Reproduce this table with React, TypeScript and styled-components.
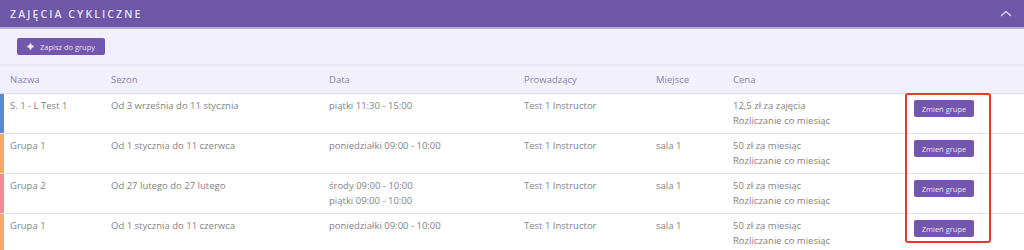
import styled, { createGlobalStyle } from "styled-components";

const GlobalStyle = createGlobalStyle`
  html, body {
    margin: 0;
    padding: 0;
    background: #ffffff;
  }
  body {
    font-family: "Open Sans", "Noto Sans", sans-serif;
  }
`;

const COLUMNS = "111px 218px 195px 132px 77px 181px 1fr";

const Panel = styled.section`
  position: relative;
  width: 1024px;
  height: 250px;
  overflow: hidden;
  background: #ffffff;
`;

const TitleBar = styled.header`
  height: 27px;
  display: flex;
  align-items: center;
  justify-content: space-between;
  padding: 0 12px 0 10px;
  background: #6e57a6;
  border-bottom: 2px solid #b9addb;
`;

const Title = styled.h2`
  margin: 0;
  font-size: 10.5px;
  font-weight: 600;
  letter-spacing: 2.1px;
  text-transform: uppercase;
  color: #e6e1f4;
`;

const Toolbar = styled.div`
  height: 35px;
  display: flex;
  align-items: center;
  padding-left: 17px;
  background: #f2f0fc;
  border-bottom: 2px solid #e9e7f0;
`;

const PurpleButton = styled.button<{ $w: number }>`
  width: ${({ $w }) => $w}px;
  height: 17px;
  display: flex;
  align-items: center;
  justify-content: center;
  gap: 6px;
  padding: 0;
  border: none;
  border-radius: 2px;
  background: #7357ad;
  color: #e6e0f7;
  font-family: inherit;
  font-size: 7.5px;
  cursor: pointer;
`;

const HeadRow = styled.div`
  display: grid;
  grid-template-columns: ${COLUMNS};
  align-items: center;
  height: 27px;
  background: #f2f0fc;
  border-bottom: 1px solid #dcd8ea;
`;

const HeadCell = styled.div`
  font-size: 9.5px;
  color: #8a82aa;
  &:first-child {
    padding-left: 10px;
  }
`;

const Row = styled.div<{ $accent: string }>`
  display: grid;
  grid-template-columns: ${COLUMNS};
  align-items: start;
  height: 40px;
  padding-top: 4px;
  box-sizing: border-box;
  border-bottom: 1px solid #e4e4e4;
  box-shadow: inset 4px 0 0 ${({ $accent }) => $accent};
  &:last-child {
    border-bottom: none;
  }
`;

const Cell = styled.div`
  font-size: 9.5px;
  line-height: 15px;
  color: #828282;
  white-space: nowrap;
  &:first-child {
    padding-left: 10px;
  }
`;

const ActionCell = styled.div`
  padding-top: 2px;
`;

const Highlight = styled.div`
  position: absolute;
  left: 905px;
  top: 93px;
  width: 86px;
  height: 150px;
  box-sizing: border-box;
  border: 2px solid #e8392f;
  border-radius: 3px;
  pointer-events: none;
`;

type Group = {
  name: string;
  season: string;
  dates: string[];
  instructor: string;
  place: string;
  price: string;
  accent: string;
};

const groups: Group[] = [
  {
    name: "S. 1 - L Test 1",
    season: "Od 3 września do 11 stycznia",
    dates: ["piątki 11:30 - 15:00"],
    instructor: "Test 1 Instructor",
    place: "",
    price: "12,5 zł za zajęcia",
    accent: "#5b88cf",
  },
  {
    name: "Grupa 1",
    season: "Od 1 stycznia do 11 czerwca",
    dates: ["poniedziałki 09:00 - 10:00"],
    instructor: "Test 1 Instructor",
    place: "sala 1",
    price: "50 zł za miesiąc",
    accent: "#f6a868",
  },
  {
    name: "Grupa 2",
    season: "Od 27 lutego do 27 lutego",
    dates: ["środy 09:00 - 10:00", "piątki 09:00 - 10:00"],
    instructor: "Test 1 Instructor",
    place: "sala 1",
    price: "50 zł za miesiąc",
    accent: "#f28b95",
  },
  {
    name: "Grupa 1",
    season: "Od 1 stycznia do 11 czerwca",
    dates: ["poniedziałki 09:00 - 10:00"],
    instructor: "Test 1 Instructor",
    place: "sala 1",
    price: "50 zł za miesiąc",
    accent: "#f6a868",
  },
];

const headers = ["Nazwa", "Sezon", "Data", "Prowadzący", "Miejsce", "Cena", ""];

function ChevronUp() {
  return (
    <svg width="12" height="7" viewBox="0 0 12 7">
      <polyline
        points="1.5,5.5 6,1.5 10.5,5.5"
        fill="none"
        stroke="#d8d0ef"
        strokeWidth="1.5"
        strokeLinecap="round"
        strokeLinejoin="round"
      />
    </svg>
  );
}

function PlusIcon() {
  return (
    <svg width="7" height="7" viewBox="0 0 7 7">
      <path d="M3.5 0.5v6M0.5 3.5h6" stroke="#ffffff" strokeWidth="1.8" />
    </svg>
  );
}

export default function App() {
  return (
    <>
      <GlobalStyle />
      <Panel>
        <TitleBar>
          <Title>Zajęcia cykliczne</Title>
          <ChevronUp />
        </TitleBar>
        <Toolbar>
          <PurpleButton $w={88}>
            <PlusIcon />
            Zapisz do grupy
          </PurpleButton>
        </Toolbar>
        <HeadRow>
          {headers.map((h, i) => (
            <HeadCell key={i}>{h}</HeadCell>
          ))}
        </HeadRow>
        {groups.map((g, i) => (
          <Row key={i} $accent={g.accent}>
            <Cell>{g.name}</Cell>
            <Cell>{g.season}</Cell>
            <Cell>
              {g.dates.map((d) => (
                <div key={d}>{d}</div>
              ))}
            </Cell>
            <Cell>{g.instructor}</Cell>
            <Cell>{g.place}</Cell>
            <Cell>
              <div>{g.price}</div>
              <div>Rozliczanie co miesiąc</div>
            </Cell>
            <ActionCell>
              <PurpleButton $w={60}>Zmień grupe</PurpleButton>
            </ActionCell>
          </Row>
        ))}
        <Highlight />
      </Panel>
    </>
  );
}
